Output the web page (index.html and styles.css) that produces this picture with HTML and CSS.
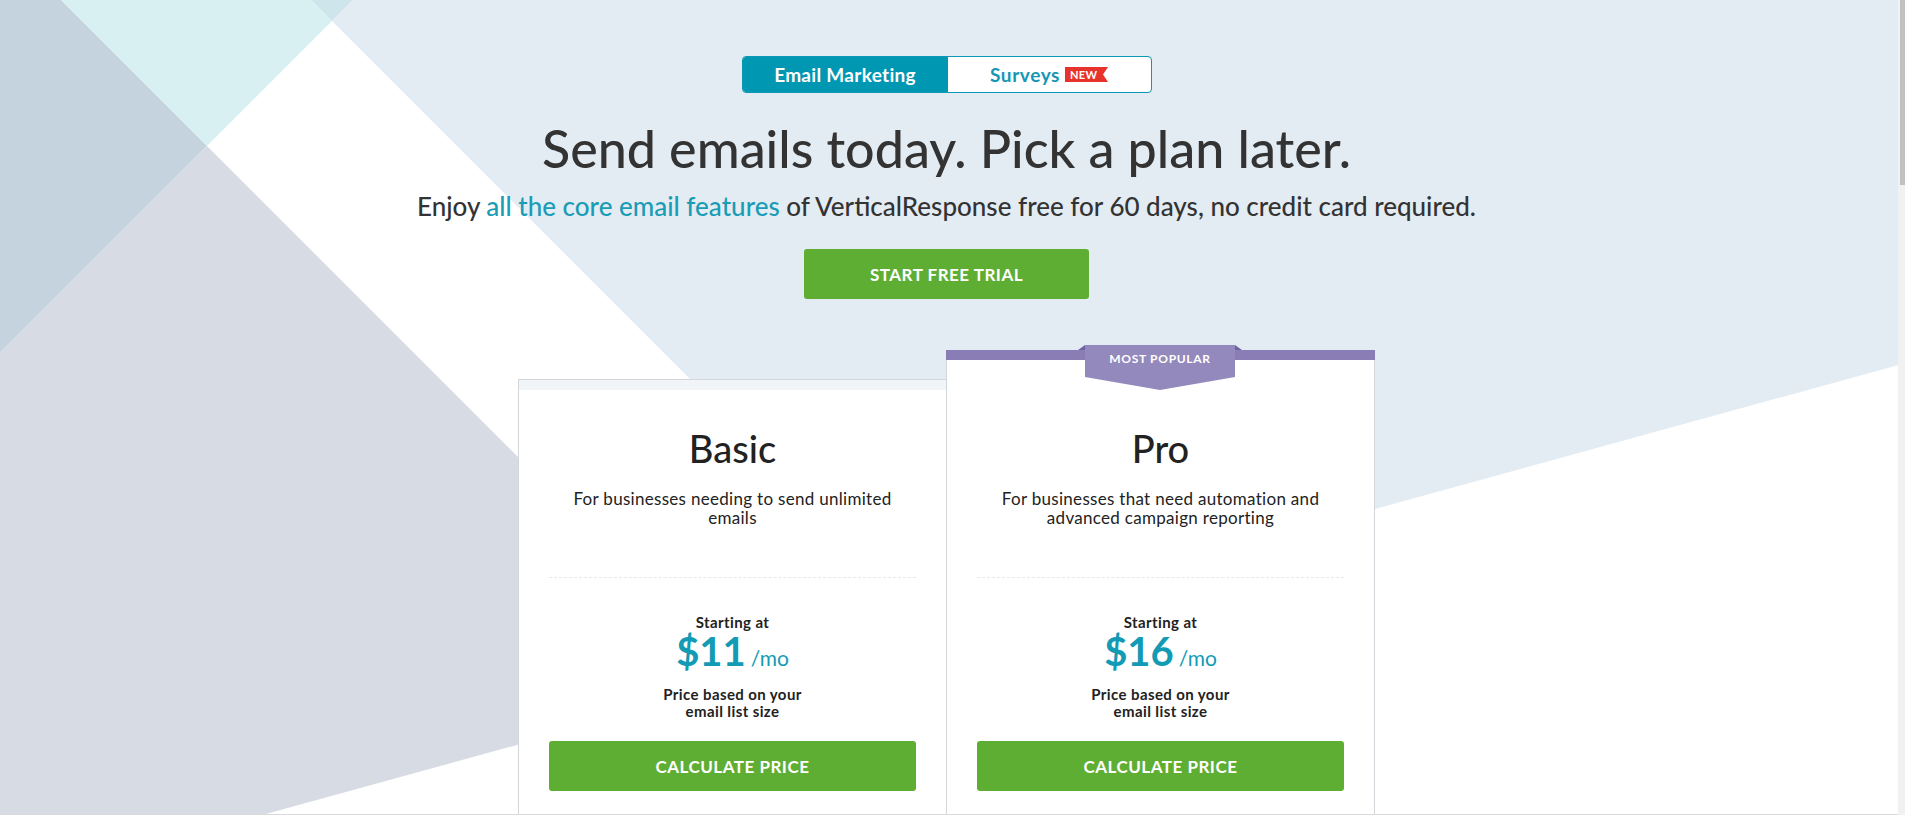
FILE: index.html
```html
<!DOCTYPE html>
<html lang="en">
<head>
  <meta charset="UTF-8">
  <title>VerticalResponse - Pricing</title>
  <link rel="stylesheet" href="styles.css">
</head>
<body>
  <div class="page">
    <svg class="bg" width="1905" height="900" viewBox="0 0 1905 900">
      <rect width="1905" height="900" fill="#ffffff"/>
      <polygon points="0,0 61,0 207,146 0,353" fill="#c4d3dd"/>
      <polygon points="61,0 311,0 332,21 207,146" fill="#d9f0f2"/>
      <polygon points="311,0 353,0 332,21" fill="#cde5eb"/>
      <polygon points="0,353 207,146 743.6,682.6 0,887.1" fill="#d7dbe3"/>
      <polygon points="353,0 1905,0 1905,363.2 939.7,628.7 332,21" fill="#e4ecf3"/>
    </svg>

    <section class="hero">
      <div class="tabs">
        <a class="tab active" href="#">Email Marketing</a>
        <a class="tab" href="#">Surveys <span class="new">NEW</span></a>
      </div>
      <h1>Send emails today. Pick a plan later.</h1>
      <p class="lead">Enjoy <a href="#">all the core email features</a> of VerticalResponse free for 60 days, no credit card required.</p>
      <a class="btn trial" href="#">START FREE TRIAL</a>
    </section>

    <section class="plans">
      <div class="plan basic">
        <div class="plan-bar"></div>
        <h2>Basic</h2>
        <p class="desc">For businesses needing to send unlimited emails</p>
        <hr>
        <div class="start">Starting at</div>
        <div class="price">$11<span>/mo</span></div>
        <div class="note">Price based on your<br>email list size</div>
        <a class="btn calc" href="#">CALCULATE PRICE</a>
      </div>

      <div class="plan pro">
        <div class="plan-bar"></div>
        <div class="ribbon">
          <svg width="164" height="45" viewBox="0 0 164 45">
            <polygon points="0,5 7,0 7,5" fill="#6f63a3"/>
            <polygon points="157,0 164,5 157,5" fill="#6f63a3"/>
            <polygon points="7,0 157,0 157,32 82,45 7,32" fill="#9389bd"/>
          </svg>
          <span>MOST POPULAR</span>
        </div>
        <h2>Pro</h2>
        <p class="desc">For businesses that need automation and advanced campaign reporting</p>
        <hr>
        <div class="start">Starting at</div>
        <div class="price">$16<span>/mo</span></div>
        <div class="note">Price based on your<br>email list size</div>
        <a class="btn calc" href="#">CALCULATE PRICE</a>
      </div>
    </section>
  </div>

  <div class="scrollbar"><div class="thumb"></div></div>
  <div class="frame-edge"></div>
</body>
</html>
```

FILE: styles.css
```css
html {
  background: #fff;
}

body {
  margin: 0;
  font-family: Lato, "Open Sans", sans-serif;
  color: #333;
}

a {
  text-decoration: none;
}

.page {
  position: relative;
  overflow: hidden;
  padding-right: 12px;
}

.bg {
  position: absolute;
  top: 0;
  left: 0;
}

/* window chrome */
.scrollbar {
  position: fixed;
  top: 0;
  right: 0;
  bottom: 0;
  width: 7px;
  background: #f1f1f1;
}

.thumb {
  margin-left: 2px;
  height: 185px;
  background: #c1c1c1;
}

.frame-edge {
  position: fixed;
  left: 0;
  right: 7px;
  bottom: 0;
  height: 1px;
  background: #d9dadc;
}

.hero {
  position: relative;
  display: flex;
  flex-direction: column;
  align-items: center;
  padding-top: 56px;
  text-align: center;
}

/* product switch */
.tabs {
  display: flex;
  border: 1px solid #0b98b4;
  border-radius: 4px;
  overflow: hidden;
  background: #fff;
}

.tab {
  display: flex;
  align-items: center;
  justify-content: center;
  gap: 5px;
  height: 35px;
  font-size: 19px;
  font-weight: 700;
  letter-spacing: 0.3px;
  color: #1597b3;
}

.tab.active {
  width: 205px;
  background: #0097b2;
  color: #fff;
}

.tab + .tab {
  width: 203px;
  letter-spacing: 0.6px;
}

.new {
  display: inline-block;
  width: 43px;
  height: 15px;
  padding-left: 5px;
  box-sizing: border-box;
  background: #e8322c;
  color: #fff;
  font-size: 11px;
  line-height: 15px;
  text-align: left;
  letter-spacing: 0.3px;
  clip-path: polygon(0 0, 100% 0, calc(100% - 5px) 50%, 100% 100%, 0 100%);
}

h1 {
  margin: 25px 0 0;
  font-size: 52px;
  line-height: 60px;
  font-weight: 500;
  color: #333;
}

.lead {
  margin: 12px 0 0;
  font-size: 26px;
  line-height: 32px;
  font-weight: 500;
}

.lead a {
  color: #1a9cb6;
}

.btn {
  display: flex;
  align-items: center;
  justify-content: center;
  height: 50px;
  border-radius: 3px;
  background: #5fae34;
  color: #fff;
  font-size: 17px;
  font-weight: 700;
  letter-spacing: 0.5px;
}

.trial {
  width: 285px;
  margin-top: 27px;
}

/* plan cards */
.plans {
  position: relative;
  display: flex;
  justify-content: center;
  align-items: flex-start;
  margin-top: 51px;
}

.plan {
  position: relative;
  width: 427px;
  min-height: 900px;
  border: 1px solid #d3d7db;
  border-top: 0;
  background: #fff;
  text-align: center;
}

.basic {
  margin-top: 29px;
  border-top: 1px solid #d3d7db;
}

.pro {
  margin-left: -1px;
  padding-top: 30px;
}

.plan-bar {
  height: 10px;
  background: #f1f5f7;
}

.pro .plan-bar {
  margin: 0 -1px;
  position: absolute;
  top: 0;
  left: 0;
  right: 0;
  background: #8a7db6;
}

.pro h2 {
  padding-top: 10px;
}

.ribbon {
  position: absolute;
  top: -5px;
  left: 131px;
  width: 164px;
  height: 45px;
}

.ribbon svg {
  display: block;
}

.ribbon span {
  position: absolute;
  top: 6px;
  left: 0;
  right: 0;
  color: #fff;
  font-size: 12px;
  font-weight: 700;
  line-height: 15px;
  letter-spacing: 0.7px;
}

.plan h2 {
  margin: 36px 0 0;
  font-size: 38px;
  line-height: 44px;
  font-weight: 500;
  color: #222;
}

.desc {
  max-width: 340px;
  height: 38px;
  margin: 19px auto 0;
  font-size: 17px;
  line-height: 19px;
  letter-spacing: 0.3px;
  color: #222;
}

.plan hr {
  margin: 50px 30px 0;
  border: 0;
  border-top: 1px dashed #e6e8ea;
}

.start {
  margin-top: 36px;
  font-size: 15px;
  line-height: 17px;
  font-weight: 700;
  letter-spacing: 0.4px;
  color: #222;
}

.price {
  font-size: 40px;
  line-height: 40px;
  font-weight: 700;
  color: #139bb5;
}

.price span {
  margin-left: 5px;
  font-size: 21px;
  line-height: 1;
  font-weight: 400;
}

.note {
  margin-top: 15px;
  font-size: 15px;
  line-height: 17px;
  font-weight: 700;
  letter-spacing: 0.4px;
  color: #222;
}

.calc {
  margin: 21px 30px 0;
}
```
